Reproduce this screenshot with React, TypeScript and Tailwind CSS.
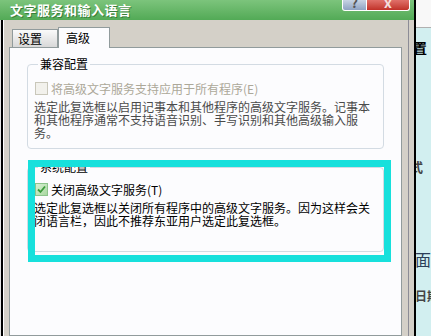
import React from "react";

const font = "font-['SimSun','Noto_Sans_CJK_SC',sans-serif]";

const App: React.FC = () => {
  return (
    <div className={`w-[431px] h-[336px] overflow-hidden flex bg-[#d2eff0] ${font}`}>
      {/* dialog window */}
      <div className="w-[414px] flex flex-col shrink-0">
        {/* title bar */}
        <div className="h-[20px] shrink-0 flex items-start bg-gradient-to-b from-[#7cc47c] to-[#52aa56]">
          <span className="ml-[10px] mt-[2px] text-[13px] leading-[16px] font-bold text-white [text-shadow:1px_1px_0_#3b7f3b] tracking-[0.5px]">
            文字服务和输入语言
          </span>
          <div className="ml-auto mr-[4px] flex">
            <div className="w-[25px] h-[11px] overflow-hidden rounded-bl-[3px] border border-t-0 border-white bg-gradient-to-b from-[#c8d4e4] to-[#8ea2c2] flex justify-center">
              <span className="text-[13px] leading-[13px] font-bold text-[#555] -mt-[4px]">?</span>
            </div>
            <div className="w-[43px] h-[11px] overflow-hidden rounded-br-[3px] border border-t-0 border-l-0 border-white bg-gradient-to-b from-[#e0706a] to-[#c03028] flex justify-center">
              <span className="text-[14px] leading-[14px] font-bold text-[#f4dede] -mt-[5px]">x</span>
            </div>
          </div>
        </div>
        {/* window body */}
        <div className="flex flex-1">
          <div className="w-[1px] bg-[#e6e6e6]" />
          <div className="w-[2px] bg-black" />
          <div className="w-[1px] bg-white" />
          <div className="flex-1 bg-[#d4d0c8] pl-[5px] pr-[6px] pt-[7px] flex flex-col">
            {/* tabs */}
            <div className="h-[20px] flex items-end pl-[3px]">
              <div className="w-[46px] h-[18px] border border-b-0 border-[#919b9c] bg-gradient-to-b from-[#fafafa] to-[#d8d8d8] text-[12px] leading-[16px] text-black pl-[5px] pt-[1px]">
                设置
              </div>
              <div className="relative z-10 -mb-px w-[52px] h-[21px] border border-b-0 border-[#919b9c] bg-[#fcfcfe] text-[12px] leading-[16px] text-black pl-[7px] pt-[2px]">
                高级
              </div>
            </div>
            {/* tab panel */}
            <div className="relative flex-1 border border-[#919b9c] bg-[#fcfcfe] pl-[17px] pt-[9px]">
              <fieldset className="w-[354px] h-[92px] border border-[#d3dbe3] rounded-[4px] px-[7px]">
                <legend className="ml-[3px] px-[2px] text-[12px] leading-[14px] text-black">兼容配置</legend>
                <div className="pt-[11px] flex items-center gap-[3px]">
                  <div className="w-[13px] h-[13px] border border-[#c9c7ba] bg-[#f2f1ec]" />
                  <span className="text-[12px] leading-[13px] text-[#aca899]">将高级文字服务支持应用于所有程序(E)</span>
                </div>
                <p className="mt-[5px] -ml-[1px] w-[342px] text-[12px] leading-[13px] text-[#4a4a4a]">
                  选定此复选框以启用记事本和其他程序的高级文字服务。记事本和其他程序通常不支持语音识别、手写识别和其他高级输入服务。
                </p>
              </fieldset>
              <fieldset className="mt-[11px] w-[354px] h-[92px] border border-[#d3dbe3] rounded-[4px] px-[7px]">
                <legend className="ml-[3px] px-[2px] text-[12px] leading-[14px] text-black">系统配置</legend>
                <div className="pt-[9px] flex items-center gap-[3px]">
                  <div className="w-[13px] h-[13px] border border-[#8cc48c] bg-gradient-to-br from-[#d8f0d4] to-[#a8d8a0] flex items-center justify-center">
                    <svg width="9" height="9" viewBox="0 0 9 9">
                      <path d="M1 4.5 L3.5 7 L8 1.5" fill="none" stroke="#3a9a3a" strokeWidth="1.8" />
                    </svg>
                  </div>
                  <span className="text-[12px] leading-[13px] text-black">关闭高级文字服务(T)</span>
                </div>
                <p className="mt-[5px] -ml-[1px] w-[342px] text-[12px] leading-[13px] text-black">
                  选定此复选框以关闭所有程序中的高级文字服务。因为这样会关闭语言栏，因此不推荐东亚用户选定此复选框。
                </p>
              </fieldset>
              {/* highlight annotation */}
              <div className="absolute left-[18px] top-[112px] w-[363px] h-[102px] border-[7px] border-[#17e0dc] pointer-events-none" />
            </div>
          </div>
          <div className="w-[6px] bg-[#d4d0c8] border-l border-[#8c8c96]" />
        </div>
      </div>
      <div className="w-[2px] bg-black shrink-0" />
      {/* page behind the dialog */}
      <div className="w-[15px] shrink-0 flex flex-col overflow-hidden">
        <div className="h-[28px] bg-[#f8f8f8] border-b border-[#b0b0b0]" />
        <div className="flex-1 bg-[#d2eff0] flex flex-col text-[#333]">
          <span className="mt-[11px] -ml-[3px] text-[14px] leading-[16px] font-bold text-black whitespace-nowrap">置</span>
          <span className="mt-[104px] -ml-[6px] text-[13px] leading-[16px] font-bold text-[#444] whitespace-nowrap">式</span>
          <span className="mt-[76px] -ml-[1px] text-[16px] leading-[20px] text-[#2c3e58] font-['Liberation_Serif','Noto_Sans_CJK_SC',serif] whitespace-nowrap">面</span>
          <span className="mt-[18px] -ml-[1px] text-[12px] leading-[14px] font-bold text-[#444] whitespace-nowrap">日期</span>
        </div>
      </div>
    </div>
  );
};

export default App;
